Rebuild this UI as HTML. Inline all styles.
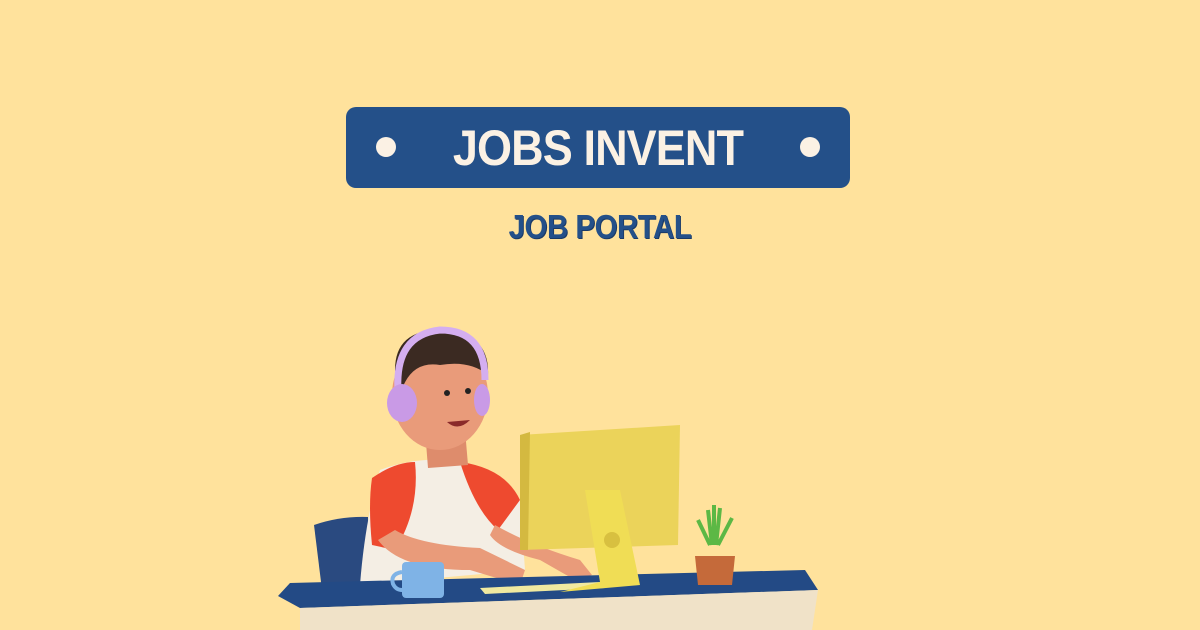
<!DOCTYPE html>
<html><head><meta charset="utf-8"><style>
html,body{margin:0;padding:0}
body{width:1200px;height:630px;background:#FFE29C;position:relative;overflow:hidden;font-family:"Liberation Sans",sans-serif}
.banner{position:absolute;left:346px;top:107px;width:504px;height:81px;background:#245089;border-radius:10px}
.dot{position:absolute;top:30px;width:20px;height:20px;border-radius:50%;background:#FBF1E4}
.t{position:absolute;left:0;right:0;top:15px;text-align:center;color:#FBF1E4;font-weight:bold;font-size:50px;line-height:52px;transform:scaleX(0.9);letter-spacing:-1px}
.sub{position:absolute;left:0;right:0;top:208px;text-align:center;color:#245089;font-weight:bold;font-size:33px;line-height:38px;text-shadow:1px 1px 0 #1a3a66;transform:scaleX(0.89);letter-spacing:-0.5px}
</style></head><body>
<div class="banner"><div class="dot" style="left:30px"></div><div class="dot" style="right:30px"></div><div class="t">JOBS INVENT</div></div>
<div class="sub">JOB PORTAL</div>
<svg width="1200" height="630" style="position:absolute;left:0;top:0">
<path d="M314 525 Q340 516 368 517 L370 590 L322 590 Z" fill="#2a4a80"/>
<path d="M380 470 Q420 455 460 462 Q505 470 520 500 L525 570 L360 585 Q365 520 380 470Z" fill="#f4eee4"/>
<path d="M372 478 Q395 462 415 462 Q420 510 395 550 L372 545 Q368 505 372 478Z" fill="#ee4a2f"/>
<path d="M460 462 Q505 468 520 500 L498 530 Q475 510 460 462Z" fill="#ee4a2f"/>
<path d="M378 540 Q400 570 470 570 L520 585 L525 570 L480 548 Q420 545 395 530Z" fill="#e99b7a"/>
<path d="M495 525 Q530 545 580 560 L592 575 L575 580 L540 560 Q500 550 490 535Z" fill="#e99b7a"/>
<path d="M425 430 L465 430 L468 465 L428 468Z" fill="#de8c6c"/>
<ellipse cx="440" cy="395" rx="48" ry="55" fill="#e99b7a"/>
<path d="M395 370 Q395 330 440 330 Q490 332 488 375 Q470 360 440 365 Q410 360 400 395Z" fill="#3b2a22"/>
<path d="M398 390 Q395 335 440 330 Q485 330 485 380" fill="none" stroke="#d4aef0" stroke-width="7"/>
<ellipse cx="402" cy="403" rx="15" ry="19" fill="#c99ae6"/>
<ellipse cx="482" cy="400" rx="8" ry="16" fill="#c99ae6"/>
<path d="M447 422 Q458 432 470 420 Z" fill="#8a2a2a"/>
<circle cx="447" cy="393" r="3" fill="#222"/><circle cx="468" cy="391" r="3" fill="#222"/>
<path d="M290 583 L805 570 L818 590 L300 608 L278 596Z" fill="#234a85"/>
<path d="M300 608 L818 590 L812 630 L300 630Z" fill="#f0e2c8"/>
<rect x="402" y="562" width="42" height="36" rx="4" fill="#7fb3e6"/>
<path d="M402 572 Q390 574 393 584 Q396 590 402 590" fill="none" stroke="#7fb3e6" stroke-width="4"/>
<path d="M480 588 L600 582 L605 588 L485 594Z" fill="#f0e9a0"/>
<path d="M520 435 L680 425 L678 545 L520 550Z" fill="#ebd35a"/>
<path d="M520 435 L530 432 L528 550 L520 550Z" fill="#d4b940"/>
<path d="M585 490 L620 490 L640 585 L560 592 L600 582Z" fill="#f0dd55"/>
<circle cx="612" cy="540" r="8" fill="#d8c040"/>
<path d="M712 545 L708 510 M716 545 L720 508 M710 545 L698 520 M718 545 L732 518 M714 545 L714 505" stroke="#5cb845" stroke-width="4" fill="none"/>
<path d="M695 556 L735 556 L732 585 L698 585Z" fill="#c56a3a"/>
</svg>
</body></html>
